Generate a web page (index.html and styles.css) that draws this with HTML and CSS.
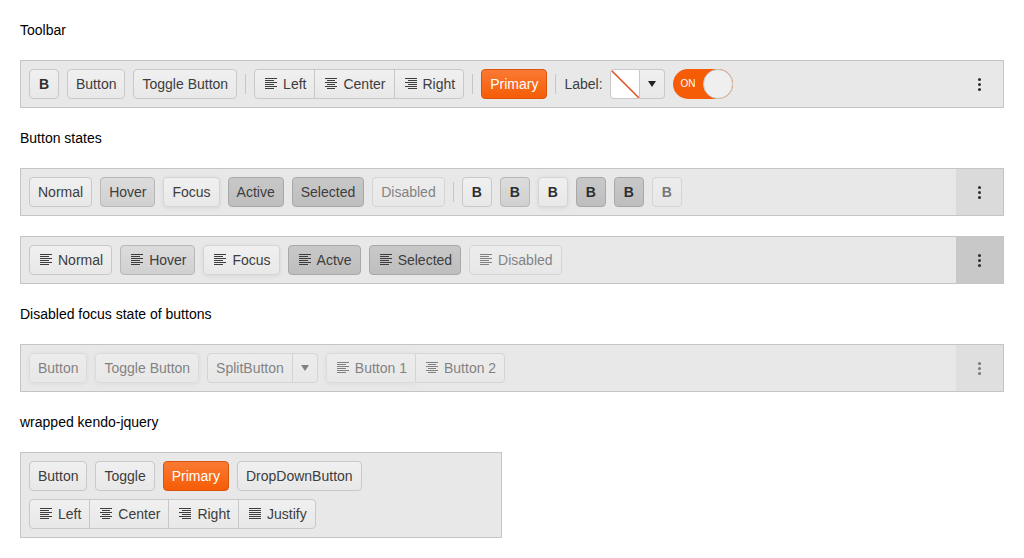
FILE: index.html
```html
<!DOCTYPE html>
<html lang='en-US'>
	<head>
		<meta charset='utf-8'>
		<title>Toolbar</title>
		<link rel="stylesheet" href="styles.css">
	</head>
	<body>
		<svg class='icon-defs' width='0' height='0'>
			<symbol id='align-left' viewBox='0 0 16 16'>
				<path d='M2 2.5h12M2 4.5h9M2 6.5h12M2 8.5h9M2 10.5h12M2 12.5h9' />
			</symbol>
			<symbol id='align-center' viewBox='0 0 16 16'>
				<path d='M2 2.5h12M4 4.5h8M2 6.5h12M4 8.5h8M2 10.5h12M4 12.5h8' />
			</symbol>
			<symbol id='align-right' viewBox='0 0 16 16'>
				<path d='M2 2.5h12M5 4.5h9M2 6.5h12M5 8.5h9M2 10.5h12M5 12.5h9' />
			</symbol>
			<symbol id='align-justify' viewBox='0 0 16 16'>
				<path d='M2 2.5h12M2 4.5h12M2 6.5h12M2 8.5h12M2 10.5h12M2 12.5h12' />
			</symbol>
		</svg>

		<p class='title'>Toolbar</p>
		<div class='toolbar'>
			<span class='btn btn-bold'>B</span>
			<span class='btn'>Button</span>
			<span class='btn'>Toggle Button</span>
			<span class='separator'></span>
			<div class='btn-group'>
				<span class='btn'><svg class='icon'><use href='#align-left'></use></svg>Left</span>
				<span class='btn'><svg class='icon'><use href='#align-center'></use></svg>Center</span>
				<span class='btn'><svg class='icon'><use href='#align-right'></use></svg>Right</span>
			</div>
			<span class='separator'></span>
			<span class='btn btn-primary'>Primary</span>
			<span class='separator'></span>
			<span class='label'>Label:</span>
			<div class='color-picker'>
				<span class='color-swatch'></span>
				<span class='split-arrow'><span class='caret caret-dark'></span></span>
			</div>
			<div class='switch'>
				<span class='switch-label'>ON</span>
				<span class='switch-thumb'></span>
			</div>
			<span class='overflow'><span class='dots'></span></span>
		</div>

		<p class='title'>Button states</p>
		<div class='toolbar'>
			<span class='btn'>Normal</span>
			<span class='btn is-hover'>Hover</span>
			<span class='btn is-focus'>Focus</span>
			<span class='btn is-active'>Active</span>
			<span class='btn is-selected'>Selected</span>
			<span class='btn is-disabled'>Disabled</span>
			<span class='separator'></span>
			<span class='btn btn-bold'>B</span>
			<span class='btn btn-bold is-hover'>B</span>
			<span class='btn btn-bold is-focus'>B</span>
			<span class='btn btn-bold is-active'>B</span>
			<span class='btn btn-bold is-selected'>B</span>
			<span class='btn btn-bold is-disabled'>B</span>
			<span class='overflow overflow-hover'><span class='dots'></span></span>
		</div>
		<div class='toolbar'>
			<span class='btn'><svg class='icon'><use href='#align-left'></use></svg>Normal</span>
			<span class='btn is-hover'><svg class='icon'><use href='#align-left'></use></svg>Hover</span>
			<span class='btn is-focus'><svg class='icon'><use href='#align-left'></use></svg>Focus</span>
			<span class='btn is-active'><svg class='icon'><use href='#align-left'></use></svg>Actve</span>
			<span class='btn is-selected'><svg class='icon'><use href='#align-left'></use></svg>Selected</span>
			<span class='btn is-disabled'><svg class='icon'><use href='#align-left'></use></svg>Disabled</span>
			<span class='overflow overflow-active'><span class='dots'></span></span>
		</div>

		<p class='title'>Disabled focus state of buttons</p>
		<div class='toolbar'>
			<span class='btn is-disabled is-focus'>Button</span>
			<span class='btn is-disabled is-focus'>Toggle Button</span>
			<div class='btn-group is-disabled'>
				<span class='btn'>SplitButton</span>
				<span class='split-arrow'><span class='caret'></span></span>
			</div>
			<div class='btn-group is-disabled'>
				<span class='btn is-focus'><svg class='icon'><use href='#align-left'></use></svg>Button 1</span>
				<span class='btn'><svg class='icon'><use href='#align-center'></use></svg>Button 2</span>
			</div>
			<span class='overflow overflow-hover is-disabled'><span class='dots'></span></span>
		</div>

		<p class='title'>wrapped kendo-jquery</p>
		<div class='toolbar toolbar-wrapped'>
			<span class='btn'>Button</span>
			<span class='btn'>Toggle</span>
			<span class='btn btn-primary'>Primary</span>
			<span class='btn'>DropDownButton</span>
			<div class='btn-group'>
				<span class='btn'><svg class='icon'><use href='#align-left'></use></svg>Left</span>
				<span class='btn'><svg class='icon'><use href='#align-center'></use></svg>Center</span>
				<span class='btn'><svg class='icon'><use href='#align-right'></use></svg>Right</span>
				<span class='btn'><svg class='icon'><use href='#align-justify'></use></svg>Justify</span>
			</div>
		</div>
	</body>
</html>
```

FILE: styles.css
```css
* {
	box-sizing: border-box;
}
body {
	margin: 0;
	padding: 20px;
	display: flex;
	flex-direction: column;
	gap: 20px;
	background: #fff;
	color: #000;
	font-family: "Liberation Sans", Arial, sans-serif;
	font-size: 14px;
	line-height: 20px;
}
.icon-defs {
	position: absolute;
}
.title {
	margin: 0;
}
.toolbar {
	display: flex;
	align-items: center;
	flex-wrap: wrap;
	gap: 8px;
	padding: 8px;
	border: 1px solid #c5c5c5;
	background: #e8e8e8;
	color: #3d3d3d;
}
.toolbar-wrapped {
	width: 482px;
}
.btn {
	display: inline-flex;
	align-items: center;
	gap: 4px;
	height: 30px;
	padding: 4px 8px;
	border: 1px solid #c8c8c8;
	border-radius: 4px;
	background: linear-gradient(#f0f0f0, #e8e8e8);
	color: #3d3d3d;
	white-space: nowrap;
}
.btn-bold {
	justify-content: center;
	width: 30px;
	padding: 4px 0;
	font-weight: bold;
	color: #2e2e2e;
}
.btn-primary {
	border-color: #d9530b;
	background: linear-gradient(#fb7a34, #f55c05);
	color: #fff;
}
.is-hover {
	border-color: #b8b8b8;
	background: linear-gradient(#dcdcdc, #d0d0d0);
}
.is-focus {
	box-shadow: 0 1px 4px rgba(0, 0, 0, 0.08);
	border-color: #d4d4d4;
}
.is-active,
.is-selected {
	border-color: #a8a8a8;
	background: linear-gradient(#c8c8c8, #bebebe);
}
.is-disabled {
	opacity: 0.6;
}
.btn-group {
	display: flex;
	height: 30px;
}
.btn-group .btn {
	border-radius: 0;
	margin-left: -1px;
}
.btn-group > :first-child {
	margin-left: 0;
	border-radius: 4px 0 0 4px;
}
.btn-group > :last-child {
	border-radius: 0 4px 4px 0;
}
.split-arrow {
	display: flex;
	align-items: center;
	justify-content: center;
	width: 26px;
	border: 1px solid #c8c8c8;
	margin-left: -1px;
	border-radius: 0 4px 4px 0;
	background: linear-gradient(#f0f0f0, #e8e8e8);
}
.icon {
	width: 16px;
	height: 16px;
	flex: none;
	fill: none;
	stroke: currentColor;
	stroke-width: 1;
}
.caret {
	width: 0;
	height: 0;
	border: 4.5px solid transparent;
	border-top: 6px solid #3d3d3d;
	border-bottom: 0;
}
.caret-dark {
	border-top-color: #222;
}
.separator {
	width: 1px;
	height: 20px;
	background: #c5c5c5;
}
.label {
	color: #3d3d3d;
}
.color-picker {
	display: flex;
	width: 55px;
	height: 30px;
	margin-left: -1px;
}
.color-picker .split-arrow {
	flex: 1;
	margin-left: 0;
	border-left: 0;
}
.color-swatch {
	display: block;
	width: 30px;
	height: 30px;
	border: 1px solid #c8c8c8;
	border-radius: 4px 0 0 4px;
	/* no colour chosen: white with a red slash */
	background: linear-gradient(to top right, #fff calc(50% - 1px), #e0532a calc(50% - 0.5px), #e0532a calc(50% + 0.5px), #fff calc(50% + 1px));
}
.switch {
	display: flex;
	align-items: center;
	justify-content: space-between;
	width: 60px;
	height: 30px;
	border-radius: 15px;
	background: #f55c05;
	color: #fff;
	font-size: 10px;
}
.switch-label {
	padding-left: 8px;
}
.switch-thumb {
	width: 30px;
	height: 30px;
	border: 1px solid #c8c8c8;
	border-radius: 50%;
	background: #efefef;
}
.overflow {
	display: flex;
	align-items: center;
	justify-content: center;
	width: 47px;
	height: 46px;
	margin: -8px -8px -8px auto;
}
.overflow-hover {
	background: #dadada;
}
.overflow-active {
	background: #c8c8c8;
}
.dots {
	width: 3px;
	height: 3px;
	border-radius: 50%;
	background: #2f2f2f;
	box-shadow: 0 -5px 0 #2f2f2f, 0 5px 0 #2f2f2f;
}
```
